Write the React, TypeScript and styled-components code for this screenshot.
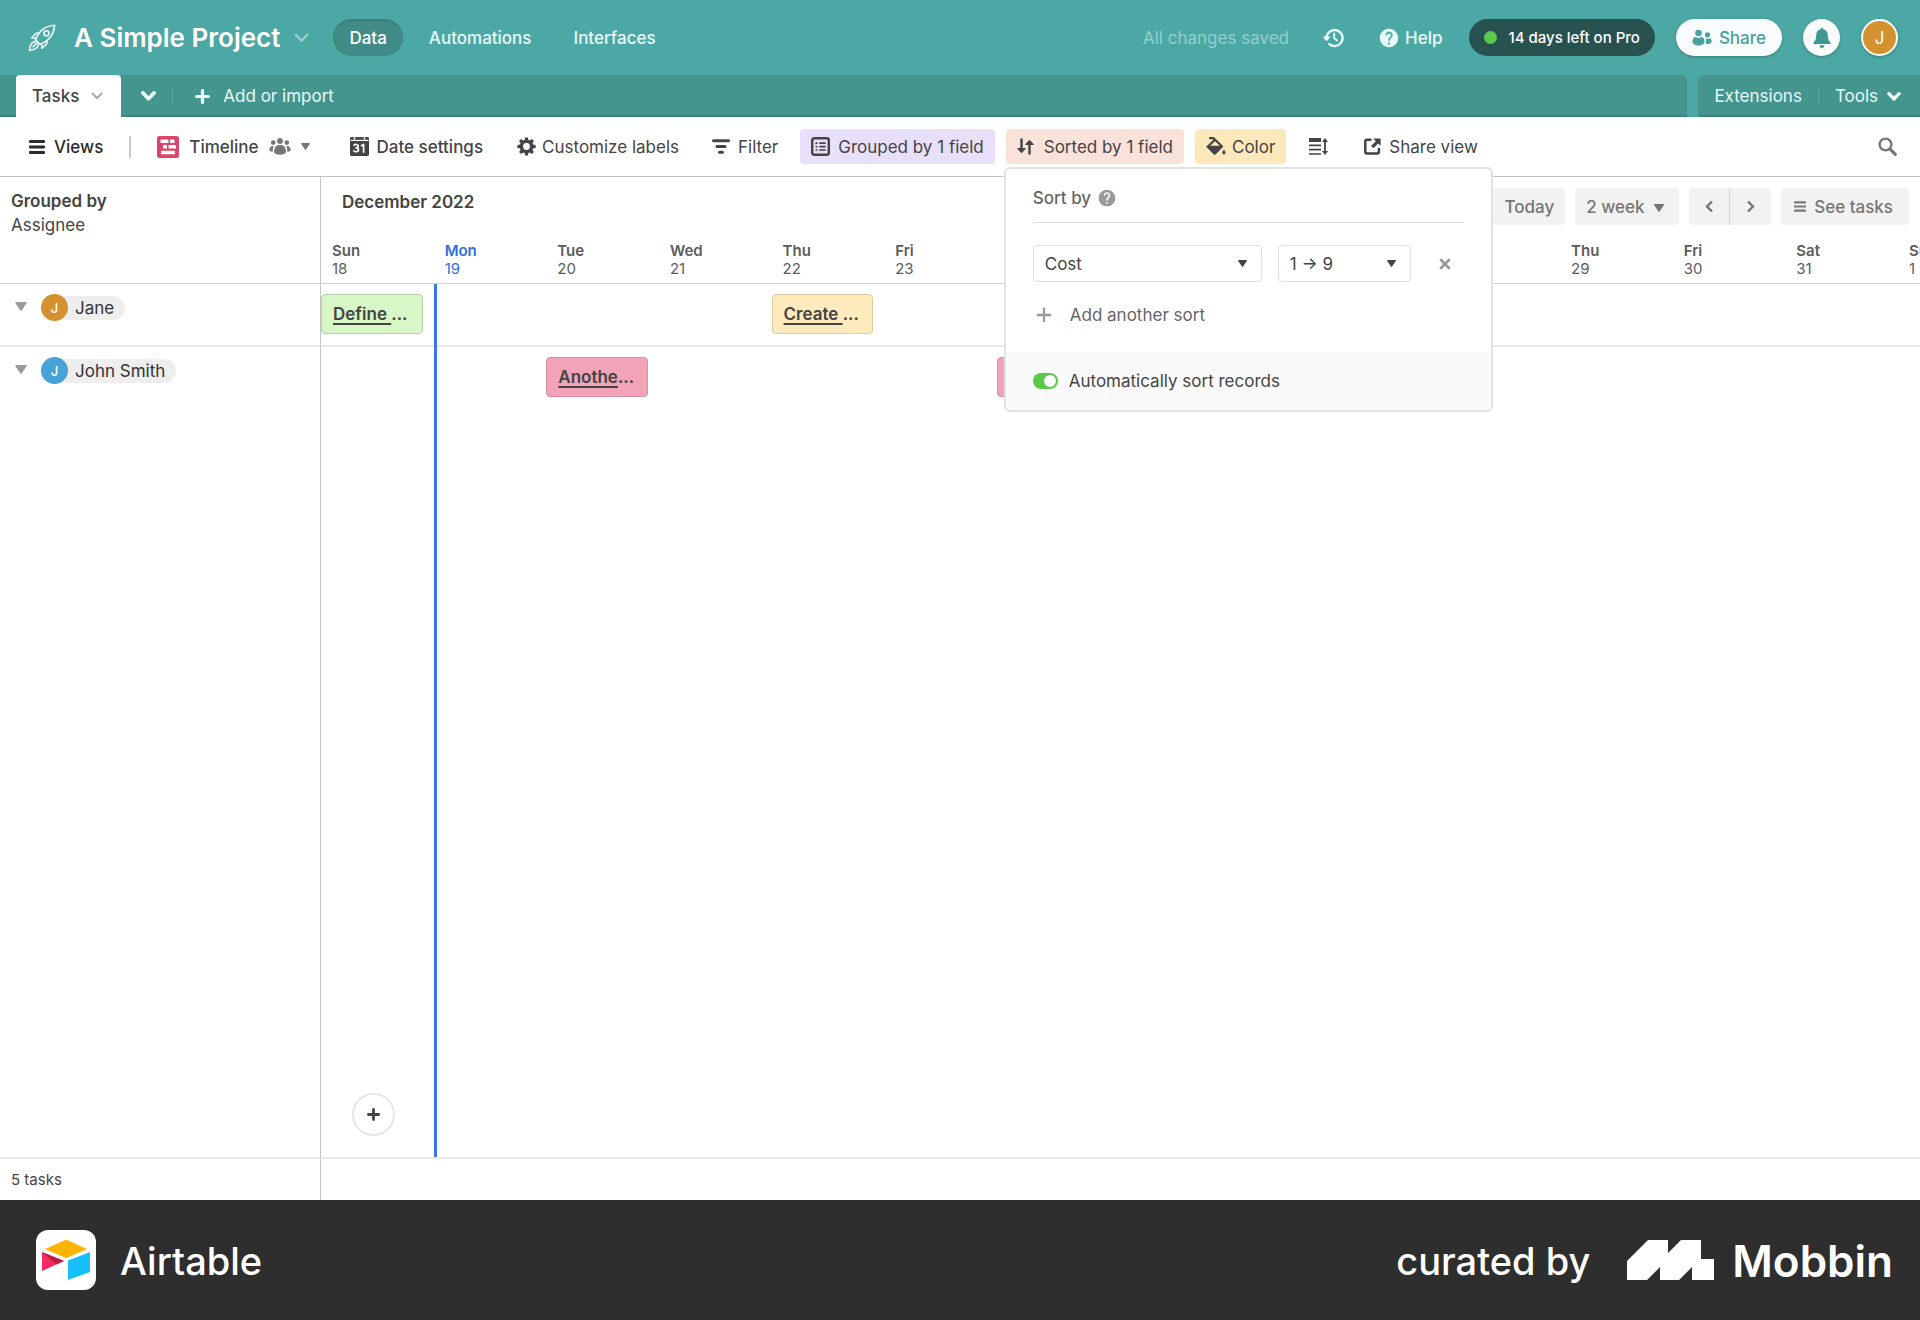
import React, { ReactNode, useState } from "react";
import styled, { createGlobalStyle, css } from "styled-components";
import { MdHelp } from "react-icons/md";

const teal = "#4ca8a4";
const tealDark = "#45958f";
const ink = "#444444";
const muted = "#666666";

const GlobalStyle = createGlobalStyle`
  * { box-sizing: border-box; }
  body {
    margin: 0;
    background: #fff;
    color: ${ink};
    font-family: Inter, "Liberation Sans", sans-serif;
    font-size: 17px;
    line-height: 24px;
  }
  button, select, input { font: inherit; color: inherit; }
  button { border: 0; padding: 0; background: none; cursor: pointer; }
  h1, h2, p { margin: 0; font-size: inherit; font-weight: inherit; }
  svg { display: block; flex: none; }
`;

const Page = styled.div`
  display: flex;
  flex-direction: column;
  min-height: 100vh;
`;

/* ---------- header ---------- */

const Header = styled.header`
  display: flex;
  align-items: center;
  justify-content: space-between;
  height: 75px;
  padding: 0 22px 0 28px;
  background: ${teal};
  color: #e8fbfa;
`;

const HeaderGroup = styled.div`
  display: flex;
  align-items: center;
`;

const BaseTitle = styled.h1`
  margin: 0 14px 0 18px;
  font-size: 26px;
  line-height: 36px;
  font-weight: 600;
  color: #fff;
`;

const Nav = styled.nav`
  display: flex;
  align-items: center;
  gap: 10px;
  margin-left: 24px;
`;

const NavButton = styled.button<{ $active?: boolean }>`
  height: 37px;
  padding: 0 16px;
  border-radius: 19px;
  font-weight: 500;
  ${(p) =>
    p.$active &&
    css`
      background: #418b87;
      color: #fff;
      box-shadow: inset 0 1px 2px rgba(0, 0, 0, 0.15);
    `}
`;

const Saved = styled.span`
  color: #94cfcc;
`;

const PlainButton = styled.button<{ $gap?: number; $left?: number; $weight?: number }>`
  display: flex;
  align-items: center;
  gap: ${(p) => p.$gap ?? 6}px;
  margin-left: ${(p) => p.$left ?? 0}px;
  font-weight: ${(p) => p.$weight ?? 400};
`;

const SearchButton = styled(PlainButton)`
  color: #777;
`;

const TrialPill = styled.button`
  display: flex;
  align-items: center;
  gap: 11px;
  height: 37px;
  margin: 0 21px 0 27px;
  padding: 0 15px;
  border-radius: 19px;
  background: #27524f;
  color: #fff;
  font-size: 15px;
  font-weight: 500;
`;

const Dot = styled.span`
  width: 13px;
  height: 13px;
  border-radius: 50%;
  background: #5bca4a;
`;

const SharePill = styled.button`
  display: flex;
  align-items: center;
  gap: 7px;
  height: 37px;
  padding: 0 16px;
  border-radius: 19px;
  background: #f8fcfc;
  color: #47a19c;
  font-weight: 500;
  box-shadow: 0 1px 3px rgba(0, 0, 0, 0.25);
`;

const RoundButton = styled.button<{ $avatar?: boolean }>`
  display: flex;
  align-items: center;
  justify-content: center;
  width: 37px;
  height: 37px;
  margin-left: 21px;
  border-radius: 50%;
  background: ${(p) => (p.$avatar ? "#d4912f" : "#f8fcfc")};
  color: ${(p) => (p.$avatar ? "#fff" : "#3f9792")};
  border: ${(p) => (p.$avatar ? "2px solid #fff" : "0")};
  box-shadow: 0 1px 3px rgba(0, 0, 0, 0.25);
`;

/* ---------- table tabs ---------- */

const TabStrip = styled.div`
  display: flex;
  gap: 11px;
  height: 42px;
  background: ${teal};
  color: #e8fbfa;
`;

const TabBar = styled.div`
  display: flex;
  flex: 1;
  align-items: center;
  padding-left: 16px;
  background: ${tealDark};
  border-radius: 0 6px 0 0;
  box-shadow: inset 0 -2px 1px rgba(0, 0, 0, 0.12);
`;

const ActiveTab = styled.button`
  display: flex;
  align-items: center;
  gap: 12px;
  height: 42px;
  padding: 0 18px 0 16px;
  border-radius: 4px 4px 0 0;
  background: #fff;
  color: ${ink};
  font-weight: 500;
`;

const ToolsBar = styled.div`
  display: flex;
  align-items: center;
  padding: 0 19px 0 16px;
  background: ${tealDark};
  border-radius: 6px 0 0 0;
  box-shadow: inset 0 -2px 1px rgba(0, 0, 0, 0.12);
`;

const TabDivider = styled.span`
  width: 1px;
  height: 16px;
  margin: 0 16px;
  background: #5fa7a2;
`;

/* ---------- view toolbar ---------- */

const Toolbar = styled.div`
  display: flex;
  align-items: center;
  height: 60px;
  padding: 0 23px 0 18px;
  gap: 11px;
  border-bottom: 1px solid #c4c4c4;
`;

const ToolButton = styled.button<{ $bg?: string; $weight?: number; $gap?: number; $after?: number; $dark?: boolean }>`
  display: flex;
  align-items: center;
  gap: ${(p) => p.$gap ?? 8}px;
  height: 35px;
  margin-right: ${(p) => p.$after ?? 0}px;
  padding: 0 11px;
  border-radius: 4px;
  white-space: nowrap;
  background: ${(p) => p.$bg ?? "transparent"};
  color: ${(p) => (p.$dark ? "#2a2a2a" : ink)};
  font-weight: ${(p) => p.$weight ?? 400};
`;

const ToolDivider = styled.span`
  width: 2px;
  height: 22px;
  margin: 0 4px;
  background: #c8c8c8;
`;

const Spacer = styled.span`
  flex: 1;
`;

const PopupAnchor = styled.div`
  position: relative;
`;

/* ---------- sort popup ---------- */

const Popup = styled.section`
  position: absolute;
  z-index: 5;
  top: calc(100% + 3px);
  left: -2px;
  width: 489px;
  border: 2px solid #e2e2e2;
  border-radius: 6px;
  background: #fff;
  overflow: hidden;
`;

const PopupHead = styled.div`
  display: flex;
  align-items: center;
  gap: 6px;
  height: 54px;
  margin: 0 27px;
  padding-top: 4px;
  border-bottom: 1px solid #dddddd;
  color: ${muted};
  font-weight: 500;
`;

const HelpGlyph = styled.button`
  color: #999;
`;

const SortRow = styled.div`
  display: flex;
  align-items: center;
  gap: 16px;
  padding: 22px 27px 0;
`;

const SelectBox = styled.div<{ $width: number }>`
  position: relative;
  width: ${(p) => p.$width}px;

  select {
    appearance: none;
    width: 100%;
    height: 37px;
    padding: 0 11px;
    border: 1px solid #dedede;
    border-radius: 4px;
    background: #fff;
    color: ${ink};
  }

  svg {
    position: absolute;
    top: 15px;
    right: 15px;
    pointer-events: none;
  }
`;

const RemoveButton = styled.button`
  display: grid;
  place-items: center;
  width: 37px;
  height: 37px;
  color: #9a9a9a;
`;

const AddSort = styled.button`
  display: flex;
  align-items: center;
  gap: 18px;
  height: 37px;
  margin: 14px 30px 19px;
  color: ${muted};

  svg { color: #999; }
`;

const PopupFoot = styled.div`
  padding: 17px 27px 17px;
  background: #fafafa;
`;

const ToggleLabel = styled.label`
  display: flex;
  align-items: center;
  gap: 11px;
`;

const Toggle = styled.input`
  appearance: none;
  display: flex;
  align-items: center;
  width: 25px;
  height: 16px;
  margin: 0;
  padding: 2px;
  border-radius: 8px;
  background: #c4c4c4;
  cursor: pointer;

  &::before {
    content: "";
    width: 12px;
    height: 12px;
    border-radius: 50%;
    background: #fff;
  }

  &:checked {
    justify-content: flex-end;
    background: #5bc948;
  }
`;

/* ---------- timeline ---------- */

const Board = styled.main`
  flex: 1;
  display: grid;
  grid-template-columns: 321px minmax(0, 1fr);
  grid-template-rows: 107px 63px minmax(200px, 1fr) 41px;
`;

const SideCell = styled.div<{ $row: number; $line?: string }>`
  grid-column: 1;
  grid-row: ${(p) => p.$row};
  border-right: 1px solid #c4c4c4;
  border-bottom: ${(p) => p.$line ?? "0"};
`;

const GroupHead = styled(SideCell)`
  padding: 12px 11px;

  strong { display: block; font-weight: 600; }
`;

const GroupCell = styled(SideCell)`
  display: flex;
  align-items: flex-start;
  gap: 14px;
  padding: 10px 15px;
`;

const Caret = styled.button`
  margin-top: 8px;
  color: #9a9a9a;
`;

const Person = styled.span`
  display: flex;
  align-items: center;
  height: 27px;
`;

const PersonAvatar = styled.span<{ $color: string }>`
  z-index: 1;
  display: grid;
  place-items: center;
  width: 27px;
  height: 27px;
  border-radius: 50%;
  background: ${(p) => p.$color};
  color: #fff;
  font-size: 13px;
  font-weight: 500;
`;

const PersonName = styled.span`
  height: 24px;
  margin-left: -14px;
  padding: 0 11px 0 21px;
  border-radius: 12px;
  background: #eeeeee;
  color: #333;
`;

const CountCell = styled(SideCell)`
  display: flex;
  align-items: center;
  padding-left: 11px;
  font-size: 15px;
`;

const CalendarHead = styled.div`
  grid-column: 2;
  grid-row: 1;
  display: flex;
  flex-direction: column;
  justify-content: space-between;
  padding-bottom: 5px;
  border-bottom: 1px solid #d4d4d4;
`;

const RangeRow = styled.div`
  display: flex;
  align-items: flex-start;
  justify-content: space-between;
  padding: 11px 11px 0 21px;
`;

const Month = styled.h2`
  line-height: 28px;
  font-weight: 600;
`;

const RangeControls = styled.div`
  display: flex;
  gap: 10px;
  color: #767676;
`;

const RangeButton = styled.button<{ $side?: "left" | "right" }>`
  display: flex;
  align-items: center;
  justify-content: center;
  gap: 8px;
  height: 37px;
  padding: 0 11px;
  border-radius: 4px;
  background: #f2f2f2;
  font-weight: 500;
  ${(p) => p.$side && css`width: 41px;`}
  ${(p) => p.$side === "left" && css`border-radius: 4px 0 0 4px; border-right: 1px solid #d5d5d5;`}
  ${(p) => p.$side === "right" && css`border-radius: 0 4px 4px 0;`}
`;

const SeeTasks = styled(RangeButton)`
  padding: 0 16px 0 13px;
`;

const RangePair = styled.div`
  display: flex;
`;

const RangeSelect = styled.div`
  position: relative;

  select {
    appearance: none;
    height: 37px;
    width: 104px;
    padding: 0 11px;
    border: 0;
    border-radius: 4px;
    background: #f2f2f2;
    font-weight: 500;
  }

  svg {
    position: absolute;
    top: 16px;
    right: 15px;
    pointer-events: none;
  }
`;

const dayColumns = css`
  display: grid;
  grid-template-columns: repeat(15, calc((100% - 22px) / 14));
  overflow: hidden;
`;

const Days = styled.div`
  ${dayColumns}
`;

const Day = styled.div<{ $today?: boolean }>`
  padding-left: 11px;
  font-size: 15px;
  line-height: 18px;
  color: ${(p) => (p.$today ? "#2d6fe0" : "#5c5c5c")};

  strong { display: block; font-weight: 600; }
`;

const Lane = styled.div<{ $row: number }>`
  ${dayColumns}
  grid-column: 2;
  grid-row: ${(p) => p.$row};
  align-items: start;
  padding-top: 10px;
  border-bottom: 2px solid #e8e8e8;
`;

const Card = styled.button<{ $day: number; $bg: string; $edge: string }>`
  grid-column: ${(p) => p.$day};
  grid-row: 1;
  height: 40px;
  margin-right: 11px;
  padding: 0 11px;
  border: 1px solid ${(p) => p.$edge};
  border-radius: 4px;
  background: ${(p) => p.$bg};
  font-weight: 600;
  text-align: left;
  white-space: pre;
  overflow: hidden;
`;

const CardText = styled.span`
  text-decoration: underline;
  text-decoration-thickness: 2px;
  text-underline-offset: 3px;
  text-decoration-skip-ink: none;
`;

const TodayLayer = styled.div`
  ${dayColumns}
  grid-column: 2;
  grid-row: 2 / 4;
  margin-bottom: 2px;
  pointer-events: none;
`;

const TodayLine = styled.span`
  grid-column: 2;
  width: 3px;
  background: #3b76e6;
`;

const AddRecord = styled.button`
  grid-column: 2;
  grid-row: 3;
  place-self: end start;
  display: grid;
  place-items: center;
  width: 43px;
  height: 43px;
  margin: 0 0 23px 31px;
  border: 2px solid #e6e6e6;
  border-radius: 50%;
  background: #fff;
`;

/* ---------- credit footer ---------- */

const Credit = styled.footer`
  display: flex;
  align-items: center;
  justify-content: space-between;
  height: 120px;
  padding: 0 27px 0 36px;
  background: #2e2e2e;
  color: #fff;
`;

const Brand = styled.div`
  display: flex;
  align-items: center;
  gap: 24px;
`;

const CreditText = styled.span<{ $big?: boolean }>`
  padding-top: 2px;
  font-size: ${(p) => (p.$big ? 44 : 38)}px;
  line-height: 48px;
  font-weight: ${(p) => (p.$big ? 600 : 500)};
`;

const MobbinMark = styled.svg`
  margin: 0 -6px 0 13px;
`;

/* ---------- icons ---------- */

type IconProps = { w: number; h?: number; box?: string; children: ReactNode };

const Icon = ({ w, h = w, box, children }: IconProps) => (
  <svg width={w} height={h} viewBox={box ?? `0 0 ${w} ${h}`} fill="currentColor" aria-hidden="true">
    {children}
  </svg>
);

const Chevron = ({ w = 12, h = 8, stroke = 2, color = "currentColor" }) => (
  <Icon w={w} h={h} box="0 0 12 8">
    <path d="M1.500 1.500 6 6.200l4.500-4.700" fill="none" stroke={color} strokeWidth={stroke} strokeLinecap="round" strokeLinejoin="round" />
  </Icon>
);

const Triangle = ({ w = 9, h = 7, color = "currentColor" }) => (
  <Icon w={w} h={h} box="0 0 10 8">
    <path d="M.6 0h8.800c.5 0 .8.500.5 1L5.600 7.500c-.3.500-.9.500-1.200 0L.1 1C-.2.500.1 0 .6 0z" fill={color} />
  </Icon>
);

const Plus = ({ size = 14, stroke = 3 }) => (
  <Icon w={size} box="0 0 14 14">
    <path d="M7 1.500v11M1.500 7h11" stroke="currentColor" strokeWidth={stroke} strokeLinecap="round" />
  </Icon>
);

const Rocket = () => (
  <Icon w={28} box="0 0 28 28">
    <g fill="none" stroke="currentColor" strokeWidth="1.600" strokeLinejoin="round" strokeLinecap="round">
      <path d="M26.600 1.200c-6.300.4-10.800 2.400-14.400 6.500-2 2.300-3.700 5.100-4.700 8.200l4.400 4.400c3.100-1 5.900-2.700 8.200-4.700 4.100-3.600 6.100-8.100 6.500-14.400z" />
      <circle cx="18.500" cy="9.300" r="2.600" />
      <path d="M11.200 9 8 9.300 3.800 14l4.400.3M19 16.700 18.700 20 14 24.200l-.3-4.400" />
      <path d="M7 17.600c-3 .2-4.800 2.200-5.600 8.800 6.600-.8 8.600-2.600 8.800-5.600" />
      <path d="M5.200 22.600l4.200-4.200" />
    </g>
  </Icon>
);

const HistoryIcon = () => (
  <Icon w={21} h={20} box="0 0 21 20">
    <path d="M3.600 9.500a8 8 0 1 1 2.800 6.600" fill="none" stroke="currentColor" strokeWidth="2.400" strokeLinecap="round" />
    <path d="M.7 8.500h5.800c.5 0 .8.600.4 1l-2.800 3.200c-.3.300-.7.300-1 0L.3 9.500c-.4-.4-.1-1 .4-1z" />
    <path d="M11.200 5.500v4.800l3 2.200" fill="none" stroke="currentColor" strokeWidth="1.900" strokeLinecap="round" strokeLinejoin="round" />
  </Icon>
);

const SharePeople = () => (
  <Icon w={20} h={17} box="0 0 20 17">
    <circle cx="6.500" cy="4" r="3.300" />
    <path d="M.5 12.500c0-3.200 1.700-4.600 3.300-4.600.8.700 1.600 1 2.700 1s1.900-.3 2.700-1c1.700 0 3.300 1.400 3.300 4.600 0 2.300-2.200 4-6 4s-6-1.700-6-4z" />
    <circle cx="15.500" cy="5.800" r="2.600" />
    <path d="M13.300 9.300c.6.500 1.300.8 2.200.8s1.600-.3 2.200-.8c1.200.3 2 1.400 2 3 0 1.600-1.500 2.600-4.200 2.600-.6 0-1.200 0-1.700-.2.500-1.600.4-3.700-.5-5.400z" />
  </Icon>
);

const Bell = () => (
  <Icon w={18} h={20} box="0 0 18 20">
    <path d="M9 0c.8 0 1.300.5 1.300 1.200 2.900.6 4.500 2.900 4.500 5.900 0 4.400 1.100 5.700 2.500 7.100.7.800.2 1.800-.8 1.800h-15c-1 0-1.500-1-.8-1.800 1.400-1.400 2.500-2.700 2.500-7.100 0-3 1.600-5.300 4.500-5.900C7.700.5 8.200 0 9 0zM6.600 17.200h4.800C11.400 18.800 10.400 20 9 20s-2.400-1.200-2.400-2.800z" />
  </Icon>
);

const Menu = ({ w = 16, h = 14 }) => (
  <Icon w={w} h={h} box="0 0 16 14">
    <path d="M1.200 1.500h13.600M1.200 7h13.600M1.200 12.500h13.600" stroke="currentColor" strokeWidth="2.800" strokeLinecap="round" />
  </Icon>
);

const TimelineIcon = () => (
  <Icon w={22} box="0 0 22 22">
    <rect width="22" height="22" rx="2.500" fill="#dc4468" />
    <g fill="#fff">
      <rect x="3.500" y="3.500" width="8" height="3.500" rx=".6" />
      <rect x="13" y="3.500" width="4.500" height="3.500" rx=".6" />
      <rect x="6" y="9" width="4" height="3.500" rx=".6" />
      <rect x="11.500" y="9" width="7.500" height="3.500" rx=".6" />
      <rect x="4" y="14.800" width="14" height="3.500" rx=".6" />
    </g>
  </Icon>
);

const Collaborators = () => (
  <Icon w={22} h={17} box="0 0 22 17">
    <g fill="#777">
      <circle cx="11" cy="3" r="2.900" />
      <circle cx="4.200" cy="4.600" r="2.300" />
      <circle cx="17.800" cy="4.600" r="2.300" />
      <path d="M5 13.500c0-4 2-6.600 6-6.600s6 2.600 6 6.600c0 2-2.500 3.200-6 3.200s-6-1.200-6-3.200z" />
      <path d="M4.600 8c-2.600-.3-4.300 1.400-4.300 4 0 1 1.200 1.700 3.400 1.700 0-2.200.3-4 .9-5.700zM17.400 8c2.600-.3 4.300 1.400 4.300 4 0 1-1.200 1.700-3.400 1.700 0-2.200-.3-4-.9-5.700z" />
    </g>
  </Icon>
);

const CalendarIcon = () => (
  <Icon w={19} box="0 0 19 19">
    <path d="M1.500 0h16c.8 0 1.500.6 1.500 1.500v16c0 .8-.7 1.500-1.500 1.500h-16C.7 19 0 18.300 0 17.500v-16C0 .6.700 0 1.500 0z" />
    <path d="M.5 3.400h18" stroke="#fff" strokeWidth="1.200" />
    <path d="M4.500 0v2.400M14.500 0v2.400" stroke="#fff" strokeWidth="1.400" />
    <g fill="none" stroke="#fff" strokeWidth="1.700" strokeLinecap="round" strokeLinejoin="round">
      <path d="M4 8.200c1-1.200 4.200-1 4.200.9 0 1.300-1 1.800-2.200 1.800 1.300 0 2.500.5 2.500 2 0 2.100-3.500 2.400-4.700.9" />
      <path d="M11.500 8.800 13.600 7.500v7.600" />
    </g>
  </Icon>
);

const Gear = () => (
  <Icon w={19} box="0 0 20 20">
    <circle cx="10" cy="10" r="5.400" fill="none" stroke="currentColor" strokeWidth="3.600" />
    {[0, 45, 90, 135, 180, 225, 270, 315].map((a) => (
      <path key={a} d="M7.900 3.600 8.500.4h3l.6 3.200z" transform={`rotate(${a} 10 10)`} />
    ))}
  </Icon>
);

const FilterIcon = () => (
  <Icon w={18} h={15} box="0 0 18 15">
    <path d="M1.500 1.700h15M5 7.500h8M7.500 13.300h3" stroke="currentColor" strokeWidth="3" strokeLinecap="round" />
  </Icon>
);

const GroupIcon = () => (
  <Icon w={19} box="0 0 19 19">
    <rect x="1.200" y="1.200" width="16.600" height="16.600" rx="2" fill="none" stroke="currentColor" strokeWidth="2.400" />
    <path d="M5.200 6.200h.6M5.200 9.600h.6M5.200 13h.6M9 6.200h5M9 9.600h5M9 13h5" stroke="currentColor" strokeWidth="1.700" strokeLinecap="round" />
  </Icon>
);

const SortIcon = () => (
  <Icon w={17} h={17} box="0 0 17 17">
    <path d="M4.500 1.500v10.500M12.500 5v10.500" stroke="currentColor" strokeWidth="2.400" strokeLinecap="round" />
    <path d="M.9 10h7.200c.6 0 .8.600.4 1L5 14.800c-.3.300-.7.300-1 0L.5 11c-.4-.4-.2-1 .4-1zM8.900 7h7.200c.6 0 .8-.6.4-1L13 2.200c-.3-.3-.7-.3-1 0L8.500 6c-.4.4-.2 1 .4 1z" />
  </Icon>
);

const PaintBucket = () => (
  <Icon w={20} h={19} box="0 0 20 19">
    <path d="M4 1.200h3.600l8.200 8" fill="none" stroke="currentColor" strokeWidth="2.200" strokeLinecap="round" strokeLinejoin="round" />
    <path d="M8.600 3 2.300 9.300" stroke="currentColor" strokeWidth="2.200" strokeLinecap="round" />
    <path d="M.9 8.800h15.600c.6 0 .8.700.4 1.100L9.500 17.500c-.5.500-1.200.5-1.700 0L.5 9.900c-.4-.4-.2-1.100.4-1.100z" />
    <path d="M17.900 12.600c.9 1.300 1.600 2.300 1.600 3.200a1.600 1.600 0 0 1-3.200 0c0-.9.700-1.900 1.600-3.200z" />
  </Icon>
);

const RowHeightIcon = () => (
  <Icon w={19} h={17} box="0 0 19 17">
    <path d="M0 0h12v4H0z" />
    <path d="M0 7.300h12M0 11.600h12M0 16h12" stroke="currentColor" strokeWidth="1.700" />
    <path d="M16 3v11" stroke="currentColor" strokeWidth="1.800" />
    <path d="M16 0l3 4h-6zM16 17l3-4h-6z" />
  </Icon>
);

const ShareViewIcon = () => (
  <Icon w={17} box="0 0 17 17">
    <path d="M6.500 1.800H3c-.9 0-1.700.7-1.700 1.700v10.200c0 .9.700 1.700 1.700 1.700h10.200c.9 0 1.700-.7 1.700-1.700V11" fill="none" stroke="currentColor" strokeWidth="2.500" strokeLinecap="round" />
    <path d="M9.200.4h6.900c.3 0 .5.200.5.5v6.900l-2.500-2.300-4.700 4.700-2.300-2.300 4.700-4.700z" />
  </Icon>
);

const SearchIcon = () => (
  <Icon w={19} box="0 0 19 19">
    <circle cx="7.500" cy="7.500" r="5.900" fill="none" stroke="currentColor" strokeWidth="2.400" />
    <path d="M12.400 12.400l4.900 4.900" stroke="currentColor" strokeWidth="3.200" strokeLinecap="round" />
  </Icon>
);

const Arrow = ({ flip = false }) => (
  <Icon w={9} h={13} box="0 0 9 13">
    <path d={flip ? "M2 1.500 7 6.500l-5 5" : "M7 1.500 2 6.500l5 5"} fill="none" stroke="currentColor" strokeWidth="2.400" />
  </Icon>
);

/* ---------- data ---------- */

const days = [
  ["Sun", 18], ["Mon", 19], ["Tue", 20], ["Wed", 21], ["Thu", 22], ["Fri", 23], ["Sat", 24],
  ["Sun", 25], ["Mon", 26], ["Tue", 27], ["Wed", 28], ["Thu", 29], ["Fri", 30], ["Sat", 31], ["Sun", 1],
] as const;

const Group = ({ name, color, row }: { name: string; color: string; row: number }) => (
  <GroupCell $row={row} $line="2px solid #e8e8e8">
    <Caret aria-label={`Collapse ${name}`}><Triangle w={12} h={9} /></Caret>
    <Person>
      <PersonAvatar $color={color}>J</PersonAvatar>
      <PersonName>{name}</PersonName>
    </Person>
  </GroupCell>
);

const SortPopup = () => {
  const [auto, setAuto] = useState(true);
  return (
    <Popup aria-label="Sort">
      <PopupHead>
        Sort by
        <HelpGlyph aria-label="About sorting"><MdHelp size={20} /></HelpGlyph>
      </PopupHead>
      <SortRow>
        <SelectBox $width={229}>
          <select aria-label="Field"><option>Cost</option></select>
          <Triangle />
        </SelectBox>
        <SelectBox $width={133}>
          <select aria-label="Order"><option>1 → 9</option></select>
          <Triangle />
        </SelectBox>
        <RemoveButton aria-label="Remove sort">
          <Icon w={12} box="0 0 12 12">
            <path d="M2 2l8 8M10 2l-8 8" stroke="currentColor" strokeWidth="2.800" strokeLinecap="round" />
          </Icon>
        </RemoveButton>
      </SortRow>
      <AddSort><Plus size={16} stroke={2} />Add another sort</AddSort>
      <PopupFoot>
        <ToggleLabel>
          <Toggle type="checkbox" role="switch" checked={auto} onChange={(e) => setAuto(e.target.checked)} />
          Automatically sort records
        </ToggleLabel>
      </PopupFoot>
    </Popup>
  );
};

export default function App() {
  return (
    <>
      <GlobalStyle />
      <Page>
        <Header>
          <HeaderGroup>
            <Rocket />
            <BaseTitle>A Simple Project</BaseTitle>
            <PlainButton aria-label="Base menu"><Chevron w={15} h={10} stroke={2} color="#94cfcc" /></PlainButton>
            <Nav>
              <NavButton $active>Data</NavButton>
              <NavButton>Automations</NavButton>
              <NavButton>Interfaces</NavButton>
            </Nav>
          </HeaderGroup>
          <HeaderGroup>
            <Saved>All changes saved</Saved>
            <PlainButton $left={34} aria-label="History"><HistoryIcon /></PlainButton>
            <PlainButton $left={34} $gap={5} $weight={500}><MdHelp size={22} />Help</PlainButton>
            <TrialPill><Dot />14 days left on Pro</TrialPill>
            <SharePill><SharePeople />Share</SharePill>
            <RoundButton aria-label="Notifications"><Bell /></RoundButton>
            <RoundButton $avatar aria-label="Account">J</RoundButton>
          </HeaderGroup>
        </Header>

        <TabStrip>
          <TabBar>
            <ActiveTab>Tasks<Chevron stroke={2} color="#aaa" /></ActiveTab>
            <PlainButton $left={20} aria-label="All tables"><Chevron w={15} h={10} stroke={3} /></PlainButton>
            <TabDivider />
            <PlainButton $gap={13} $left={6}><Plus size={15} stroke={3} />Add or import</PlainButton>
          </TabBar>
          <ToolsBar>
            <PlainButton>Extensions</PlainButton>
            <TabDivider />
            <PlainButton $gap={9}>Tools<Chevron w={14} h={9} stroke={3} /></PlainButton>
          </ToolsBar>
        </TabStrip>

        <Toolbar>
          <ToolButton $weight={500} $gap={9} $dark><Menu />Views</ToolButton>
          <ToolDivider />
          <ToolButton $weight={500} $gap={10} $after={7}>
            <TimelineIcon />Timeline<Collaborators /><Triangle color="#777" />
          </ToolButton>
          <ToolButton $weight={500} $after={1}><CalendarIcon />Date settings</ToolButton>
          <ToolButton $gap={6}><Gear />Customize labels</ToolButton>
          <ToolButton><FilterIcon />Filter</ToolButton>
          <ToolButton $bg="#e8e0fb"><GroupIcon />Grouped by 1 field</ToolButton>
          <PopupAnchor>
            <ToolButton $bg="#f9e2d9" $gap={10} aria-expanded="true"><SortIcon />Sorted by 1 field</ToolButton>
            <SortPopup />
          </PopupAnchor>
          <ToolButton $bg="#fce9bb" $gap={6} $after={1}><PaintBucket />Color</ToolButton>
          <ToolButton $after={3} aria-label="Row height"><RowHeightIcon /></ToolButton>
          <ToolButton><ShareViewIcon />Share view</ToolButton>
          <Spacer />
          <SearchButton aria-label="Search"><SearchIcon /></SearchButton>
        </Toolbar>

        <Board>
          <GroupHead $row={1} $line="1px solid #d4d4d4">
            <strong>Grouped by</strong>
            Assignee
          </GroupHead>
          <CalendarHead>
            <RangeRow>
              <Month>December 2022</Month>
              <RangeControls>
                <RangeButton>Today</RangeButton>
                <RangeSelect>
                  <select aria-label="Time scale"><option>2 week</option></select>
                  <Triangle w={10} h={8} />
                </RangeSelect>
                <RangePair>
                  <RangeButton $side="left" aria-label="Previous"><Arrow /></RangeButton>
                  <RangeButton $side="right" aria-label="Next"><Arrow flip /></RangeButton>
                </RangePair>
                <SeeTasks><Menu w={12} h={11} />See tasks</SeeTasks>
              </RangeControls>
            </RangeRow>
            <Days>
              {days.map(([name, date]) => (
                <Day key={`${name}${date}`} $today={date === 19}>
                  <strong>{name}</strong>
                  {date}
                </Day>
              ))}
            </Days>
          </CalendarHead>

          <Group name="Jane" color="#d4912f" row={2} />
          <Lane $row={2}>
            <Card $day={1} $bg="#d7f7c6" $edge="#b4d3a6"><CardText>Define </CardText>...</Card>
            <Card $day={5} $bg="#fdebbd" $edge="#dccb9c"><CardText>Create </CardText>...</Card>
          </Lane>

          <Group name="John Smith" color="#47a3d5" row={3} />
          <Lane $row={3}>
            <Card $day={3} $bg="#f2a3b8" $edge="#d88fa2"><CardText>Anothe</CardText>...</Card>
            <Card $day={7} $bg="#f2a3b8" $edge="#d88fa2" aria-label="Task" />
          </Lane>

          <CountCell $row={4}>5 tasks</CountCell>
          <TodayLayer><TodayLine /></TodayLayer>
          <AddRecord aria-label="Add record"><Plus size={13} stroke={3} /></AddRecord>
        </Board>

        <Credit>
          <Brand>
            <svg width="60" height="60" viewBox="0 0 60 60" aria-hidden="true">
              <rect width="60" height="60" rx="12" fill="#fff" />
              <path d="M9 19 28.500 10.300Q30 9.700 31.500 10.300L51 19 31.500 27.500Q30 28.100 28.500 27.500z" fill="#fcb400" />
              <path d="M32 30.500 54 22v20L32 50z" fill="#18bfff" />
              <path d="M6 22 28 31 6 41z" fill="#f82b60" />
              <path d="M6 22 28 31 20.500 34.500z" fill="#ba1e45" />
            </svg>
            <CreditText>Airtable</CreditText>
          </Brand>
          <Brand>
            <CreditText>curated by</CreditText>
            <MobbinMark width="87" height="40" viewBox="0 0 87 40" aria-hidden="true">
              <path d="M0 21 21 0h20v13L54 0h20v19h13v21H65V27L52 40H33V27L20 40H0z" fill="#fff" />
            </MobbinMark>
            <CreditText $big>Mobbin</CreditText>
          </Brand>
        </Credit>
      </Page>
    </>
  );
}
